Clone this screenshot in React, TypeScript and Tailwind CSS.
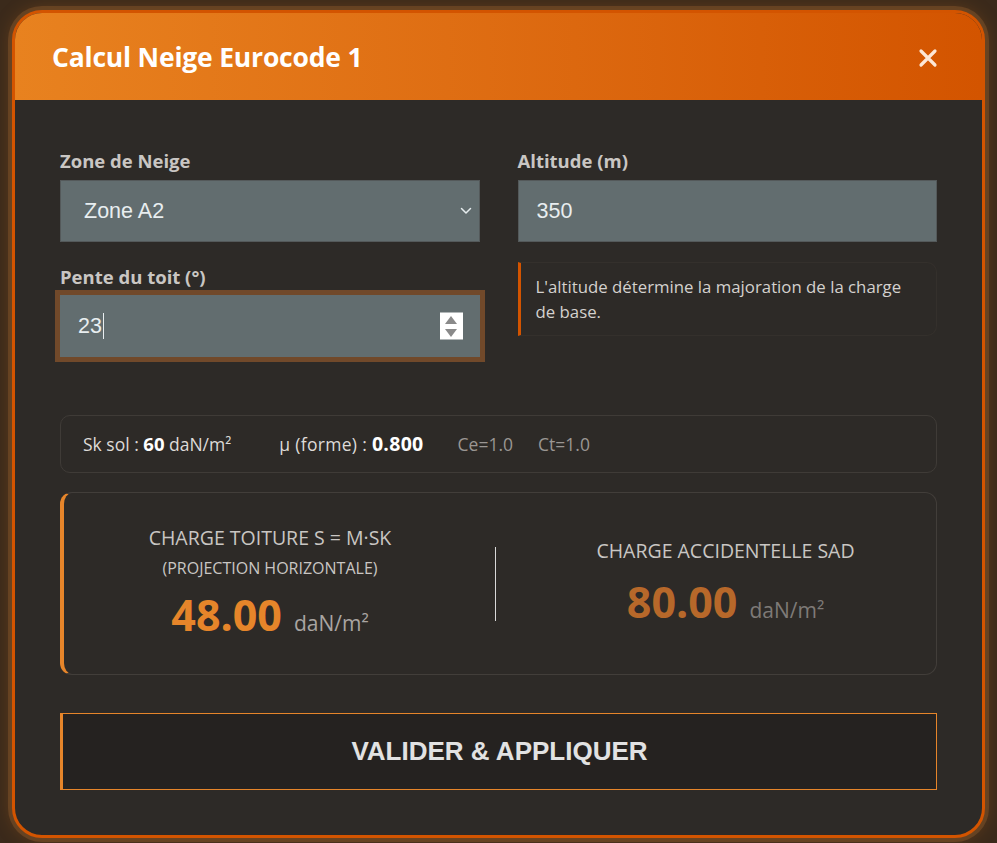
import { useState } from 'react'

const UI = '"Open Sans", "Noto Sans", sans-serif'
const FIELD = '"Liberation Sans", Arial, sans-serif'

// Petit chevron pour le select
function Chevron() {
  return (
    <svg width="12" height="8" viewBox="0 0 12 8" className="pointer-events-none absolute right-[8px] top-1/2 -translate-y-1/2">
      <path d="M1.5 1.5 L6 6 L10.5 1.5" fill="none" stroke="#e6ecee" strokeWidth="1.5" strokeLinecap="round" strokeLinejoin="round" />
    </svg>
  )
}

// Flèches du champ numérique
function Spinner() {
  return (
    <div className="absolute right-[17px] top-1/2 flex h-[27px] w-[23px] -translate-y-1/2 flex-col items-center justify-center gap-[4px] bg-white">
      <svg width="14" height="9" viewBox="0 0 14 9">
        <path d="M7 0.5 L13 8.5 L1 8.5 Z" fill="#8a8a8a" />
      </svg>
      <svg width="14" height="9" viewBox="0 0 14 9">
        <path d="M1 0.5 L13 0.5 L7 8.5 Z" fill="#8a8a8a" />
      </svg>
    </div>
  )
}

export default function App() {
  const [zone, setZone] = useState('A2')
  const [altitude, setAltitude] = useState('350')

  return (
    <div className="min-h-screen overflow-hidden bg-[#3b2a1b] pt-[10px]" style={{ fontFamily: UI }}>
      <div className="mx-[12px] overflow-hidden rounded-[30px] border-[3px] border-[#d35400] bg-[#2d2a27] shadow-[0_0_0_4px_rgba(120,78,40,0.6),0_0_18px_rgba(200,110,30,0.35)]">
        {/* En-tête */}
        <div className="flex h-[87px] items-center justify-between bg-gradient-to-r from-[#e8821f] to-[#d35400] pl-[37px] pr-[43px]">
          <h1 className="pt-[2px] text-[26.5px] font-bold tracking-[-0.2px] text-white">Calcul Neige Eurocode 1</h1>
          <button className="pt-[3px] text-[#fde7d6]">
            <svg width="22" height="22" viewBox="0 0 22 22">
              <path d="M4 4 L18 18 M18 4 L4 18" stroke="currentColor" strokeWidth="3.2" strokeLinecap="round" />
            </svg>
          </button>
        </div>

        {/* Corps */}
        <div className="px-[45px] pb-[45px] pt-[49px]">
          <div className="grid grid-cols-2 gap-x-[38px]">
            <div>
              <label className="mb-[7px] block text-[18.5px] font-bold leading-[24px] text-[#c9c6c3]">Zone de Neige</label>
              <div className="relative">
                <select
                  value={zone}
                  onChange={(e) => setZone(e.target.value)}
                  className="h-[62px] w-full appearance-none border border-[#54595a] bg-[#626d6f] pl-[23px] text-[21.5px] text-[#e8eef0] outline-none"
                  style={{ fontFamily: FIELD }}
                >
                  <option value="A1">Zone A1</option>
                  <option value="A2">Zone A2</option>
                  <option value="B1">Zone B1</option>
                  <option value="B2">Zone B2</option>
                  <option value="C1">Zone C1</option>
                  <option value="C2">Zone C2</option>
                  <option value="D">Zone D</option>
                  <option value="E">Zone E</option>
                </select>
                <Chevron />
              </div>

              <label className="mb-[6px] mt-[23px] block text-[18.5px] font-bold leading-[24px] text-[#c9c6c3]">Pente du toit (°)</label>
              <div
                className="relative flex h-[62px] items-center bg-[#626d6f] pl-[18px] text-[21.5px] text-[#e8eef0] outline outline-[5px] outline-[#71492a]"
                style={{ fontFamily: FIELD }}
              >
                <span>23</span>
                <span className="ml-[1px] h-[26px] w-[1.5px] bg-[#e8eef0]" />
                <Spinner />
              </div>
            </div>

            <div>
              <label className="mb-[7px] block text-[18.5px] font-bold leading-[24px] text-[#c9c6c3]">Altitude (m)</label>
              <input
                value={altitude}
                onChange={(e) => setAltitude(e.target.value)}
                className="h-[62px] w-full border border-[#54595a] bg-[#626d6f] pl-[18px] text-[21.5px] text-[#e8eef0] outline-none"
                style={{ fontFamily: FIELD }}
              />
              <div className="mt-[20px] rounded-r-[10px] border-y border-r border-l-[3px] border-y-[#34302c] border-r-[#34302c] border-l-[#d35400] py-[11px] pl-[15px] pr-[20px] text-[16.8px] leading-[25px] text-[#d4d1ce]">
                L'altitude détermine la majoration de la charge de base.
              </div>
            </div>
          </div>

          {/* Récapitulatif */}
          <div className="mt-[58px] flex h-[58px] items-center rounded-[10px] border border-[#3f3b37] px-[22px] text-[17.5px] text-[#dedbd8]">
            <span>
              Sk sol : <b className="text-[18.5px] text-white">60</b> daN/m²
            </span>
            <span className="ml-[48px] tracking-[0.3px]">
              µ (forme) : <b className="text-[19.5px] text-white">0.800</b>
            </span>
            <span className="ml-[34px] text-[17.5px] text-[#9a9693]">Ce=1.0</span>
            <span className="ml-[25px] text-[17.5px] text-[#9a9693]">Ct=1.0</span>
          </div>

          {/* Résultats */}
          <div className="mt-[19px] flex h-[183px] items-center rounded-[12px] border border-l-[4px] border-[#423e3a] border-l-[#e6852a]">
            <div className="flex w-[412px] flex-col items-center">
              <div className="text-[19.5px] uppercase leading-[24px] text-[#c9c6c3]">Charge toiture S = M·SK</div>
              <div className="mt-[7px] text-[16px] uppercase leading-[22px] text-[#c9c6c3]">(Projection horizontale)</div>
              <div className="mt-[9px] flex items-baseline">
                <span className="text-[43px] font-bold leading-[54px] text-[#e6852a]">48.00</span>
                <span className="ml-[12px] text-[21px] text-[#a9a5a2]">daN/m²</span>
              </div>
            </div>
            <div className="ml-[19px] h-[74px] w-px bg-[#d8d8d8]" />
            <div className="flex flex-1 flex-col items-center pl-[21px] pr-[2px]">
              <div className="text-[19.5px] uppercase leading-[24px] text-[#c9c6c3]">Charge accidentelle SAD</div>
              <div className="mt-[12px] flex items-baseline">
                <span className="text-[43px] font-bold leading-[54px] text-[#b7682a]">80.00</span>
                <span className="ml-[12px] text-[21px] text-[#7e7a77]">daN/m²</span>
              </div>
            </div>
          </div>

          {/* Bouton */}
          <button
            className="mt-[38px] flex h-[77px] w-full items-center justify-center border border-l-[3px] border-[#e6852a] bg-[#252220] text-[26px] font-bold text-[#e2e2e2]"
            style={{ fontFamily: FIELD }}
          >
            VALIDER &amp; APPLIQUER
          </button>
        </div>
      </div>
    </div>
  )
}
